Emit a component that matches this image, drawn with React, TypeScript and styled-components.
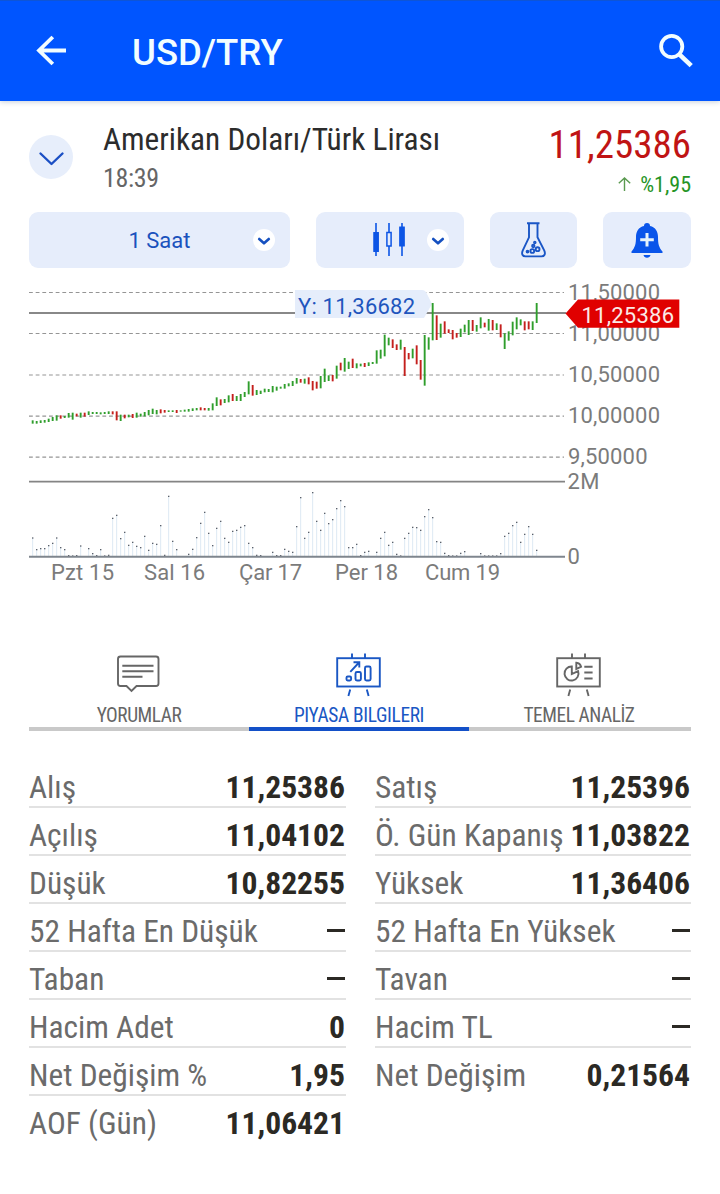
import React from "react";
import styled, { createGlobalStyle } from "styled-components";

const GlobalStyle = createGlobalStyle`
  * { box-sizing: border-box; }
  body { margin: 0; background: #fff; font-family: Roboto, "Liberation Sans", sans-serif; }
`;

const Screen = styled.main`
  width: 720px;
  height: 1194px;
  overflow: hidden;
  background: #fff;
  display: flex;
  flex-direction: column;
`;

const AppBar = styled.header`
  height: 101px;
  flex: none;
  background: #0055ff;
  border-top: 1px solid #0f55d6;
  box-shadow: 0 1px 5px rgba(0, 40, 90, 0.22);
  display: flex;
  align-items: center;
  padding: 0 25px 0 34px;
`;

const Title = styled.h1`
  flex: 1;
  margin: 4px 0 0 64px;
  color: #f2fdff;
  font-size: 36.5px;
  line-height: 44px;
  font-weight: 500;
`;

const Condensed = styled.span<{ $size: number; $weight?: number; $color: string; $line: number; $spacing?: number }>`
  font-family: "Roboto Condensed", Roboto, sans-serif;
  font-stretch: 75%;
  font-size: ${(p) => p.$size}px;
  font-weight: ${(p) => p.$weight ?? 400};
  line-height: ${(p) => p.$line}px;
  letter-spacing: ${(p) => p.$spacing ?? 0}px;
  color: ${(p) => p.$color};
  white-space: nowrap;
`;

const Summary = styled.section`
  display: flex;
  height: 111px;
  padding: 0 29px;
`;

const RoundToggle = styled.button`
  width: 44px;
  height: 44px;
  margin: 34px 30px 0 0;
  padding: 0;
  border: 0;
  border-radius: 50%;
  background: #e7eefb;
`;

const NameBlock = styled.div`
  flex: 1;
  display: flex;
  flex-direction: column;
  padding-top: 20px;
`;

const PriceBlock = styled.div`
  display: flex;
  flex-direction: column;
  align-items: flex-end;
  padding-top: 21px;
`;

const Change = styled.div`
  display: flex;
  align-items: center;
  gap: 9px;
  padding-top: 1px;
  svg { margin-top: -3px; }
`;

const Toolbar = styled.nav`
  display: flex;
  gap: 26px;
  height: 56px;
  padding: 0 29px;
`;

const ToolButton = styled.button<{ $width: number }>`
  width: ${(p) => p.$width}px;
  height: 56px;
  padding: 0;
  border: 0;
  border-radius: 9px;
  background: #e6edfb;
  color: #1a52bd;
  font: 400 22px/56px Roboto, sans-serif;
  display: flex;
  align-items: center;
  justify-content: center;
`;

const ToolContent = styled.span<{ $pad: number; $drop?: number }>`
  flex: 1;
  display: flex;
  justify-content: center;
  padding: ${(p) => p.$drop ?? 0}px 0 0 ${(p) => p.$pad}px;
`;

const Dot = styled.span<{ $right: number }>`
  width: 22px;
  height: 22px;
  margin-right: ${(p) => p.$right}px;
  border-radius: 50%;
  background: #fff;
  display: flex;
`;

const ChartArea = styled.section`
  height: 332px;
  svg { display: block; }
  text { font-family: Roboto, sans-serif; font-size: 22px; }
`;

const Tabs = styled.nav`
  display: grid;
  grid-template-columns: 220px 220px 222px;
  margin: 50px 29px 0;
`;

const Tab = styled.button<{ $active?: boolean }>`
  height: 81px;
  padding: 3px 0 0;
  border: 0;
  border-bottom: 4px solid ${(p) => (p.$active ? "#1350c8" : "#c9c9c9")};
  background: none;
  color: ${(p) => (p.$active ? "#1a57c4" : "#666")};
  display: flex;
  flex-direction: column;
  align-items: center;
  gap: 7px;
  svg { flex: none; margin-right: 1px; }
  &:last-child { padding-right: 2px; }
`;

const Columns = styled.section`
  display: grid;
  grid-template-columns: 317px 316px;
  column-gap: 29px;
  padding: 29px 29px 0;
`;

const Row = styled.div<{ $last?: boolean }>`
  height: 48px;
  border-bottom: 2px solid ${(p) => (p.$last ? "transparent" : "#e2e2e2")};
  display: flex;
  justify-content: space-between;
  align-items: center;
  padding: 9px 1px 0 0;
`;

const Dash = styled.i`
  width: 18px;
  height: 3px;
  margin-top: -2px;
  background: #2b2924;
`;

const CHART_TOP = 268;
const STEP = 4;
const FIRST_X = 32.67;

// Each entry: top, bottom (in thirds of a pixel below y = 280); r marks a falling hour.
const candles =
  "421-431 423-431 421-429 420-428 416-426 411-423 406-422 406-416r 408-414 399-413 398-419 401-409r 398-413 398-410r 394-405 396-402 396-402 397-403 396-402 394-402 394-403r 394-421r 404-423 404-415r 404-412 402-414r 398-413 401-410 396-409 390-406 386-402 390-403 388-400r 390-398r 391-396 391-396 390-399r 391-395 389-395 387-395 385-393 384-391 382-391r 384-391r 384-392 370-391 352-378 358-376r 357-369 346-367 342-363r 348-363 342-363 336-351 304-343 315-347r 330-345 332-342 326-337 327-336 318-337 320-332 320-326 312-326 310-319 303-318 294-311 297-308r 296-311 292-313r 303-331r 305-326r 288-325 266-306 286-303 285-304r 257-296 248-271r 234-275 245-267 236-264r 250-265 251-259 249-261r 247-258 246-252 211-251 209-236 164-229 173-196 178-204r 193-210r 179-209 201-288r 219-238r 206-235 196-253r 240-299r 165-317 172-209 69-181 106-180r 131-173 124-161r 148-159r 150-178r 159-173r 146-171 134-157 120-165 120-153r 135-155 112-145 128-142r 117-152 120-151r 130-150 133-172r 160-207 154-182 125-166 112-148 118-136 124-151r 124-148r 124-150 69-129"
    .split(" ")
    .map((entry) => {
      const [top, bottom] = entry.replace("r", "").split("-").map(Number);
      return { top: 280 + top / 3, bottom: 280 + bottom / 3, down: entry.endsWith("r") };
    });

// Top of each hour's volume bar, in thirds of a pixel below y = 470.
const volumes = [
  204, 239, 236, 236, 227, 220, 204, 233, 239, 257, 258, 257, 228, 260, 236, 251, 257, 239, 258, 256, 145, 136, 206, 187,
  226, 217, 229, 233, 199, 241, 220, 223, 167, 256, 79, 214, 239, 260, 260, 253, 238, 203, 160, 127, 190, 227, 175, 154,
  205, 217, 184, 181, 172, 167, 220, 233, 256, 257, 260, 260, 247, 257, 257, 238, 244, 247, 170, 83, 205, 187, 68, 154,
  181, 130, 161, 149, 116, 92, 110, 233, 233, 223, 257, 247, 244, 260, 247, 205, 187, 226, 217, 253, 258, 205, 190, 172,
  173, 181, 140, 119, 143, 215, 217, 250, 257, 258, 258, 250, 245, 260, 260, 260, 251, 258, 258, 258, 258, 251, 199, 190,
  167, 157, 217, 193, 170, 193, 241,
].map((v) => 470 + v / 3);

const gridLines = [
  { y: 292.5, label: "11,50000", width: 92 },
  { y: 333.5, label: "11,00000", width: 92 },
  { y: 375, label: "10,50000", width: 92 },
  { y: 416.2, label: "10,00000", width: 92 },
  { y: 457.2, label: "9,50000", width: 79.5 },
];

const days = [
  { x: 51, label: "Pzt 15", width: 63 },
  { x: 144, label: "Sal 16", width: 61 },
  { x: 239, label: "Çar 17", width: 63 },
  { x: 335, label: "Per 18", width: 63 },
  { x: 425, label: "Cum 19", width: 75 },
];

const Chart = () => (
  <ChartArea>
    <svg width="720" height="332" viewBox={`0 ${CHART_TOP} 720 332`}>
      {gridLines.map((g) => (
        <g key={g.label}>
          <line x1="29" x2="564" y1={g.y} y2={g.y} stroke="#959595" strokeWidth="1.2" strokeDasharray="3.8 2.87" />
          <text x="568" y={g.y + 7} fill="#7b7b7b" textLength={g.width}>{g.label}</text>
        </g>
      ))}
      <line x1="29" x2="566" y1="313" y2="313" stroke="#888" strokeWidth="2" />
      <line x1="29" x2="565" y1="481.6" y2="481.6" stroke="#848484" strokeWidth="1.7" />
      {volumes.map((top, i) => {
        const x = FIRST_X + i * STEP;
        return top > 556 ? null : (
          <g key={i}>
            <line x1={x} x2={x} y1={top} y2="556" stroke="#dde9f3" strokeWidth="1" />
            <rect x={x - 0.6} y={top - 0.6} width="1.3" height="1.2" fill="#444a55" />
          </g>
        );
      })}
      <line x1="29" x2="565" y1="556.8" y2="556.8" stroke="#7f868e" strokeWidth="2" />
      <path d="M295 290h127q3 0 4.5 3L432 304l-8 14H295z" fill="#e5edfb" />
      {candles.map((c, i) => {
        const x = FIRST_X + i * STEP;
        return <line key={i} x1={x} x2={x} y1={c.top} y2={c.bottom} stroke={c.down ? "#c4201d" : "#2f9e2c"} strokeWidth="1.9" />;
      })}
      <text x="298" y="313.5" fill="#1f55bd" textLength="117">Y: 11,36682</text>
      <path d="M565.5 313.5 578 299.5h101.3v28.3H578z" fill="#e00000" />
      <text x="581.5" y="322.7" fill="#fbe9e6" textLength="92.5">11,25386</text>
      <text x="567.5" y="488.5" fill="#7b7b7b" textLength="32">2M</text>
      <text x="567.5" y="564" fill="#7b7b7b">0</text>
      {days.map((d) => (
        <text key={d.label} x={d.x} y="580.4" fill="#7b7b7b" textLength={d.width}>{d.label}</text>
      ))}
    </svg>
  </ChartArea>
);

const ChevronDot = ({ right }: { right: number }) => (
  <Dot $right={right}>
    <svg width="22" height="22" viewBox="0 0 22 22" fill="none" stroke="#1550c0" strokeWidth="2.6" strokeLinecap="round" strokeLinejoin="round">
      <path d="m6.2 10 4.8 4.3 4.8-4.3" />
    </svg>
  </Dot>
);

const BoardFrame = () => (
  <>
    <rect x="1.2" y="5.2" width="42.6" height="28.3" />
    <path d="M16 .5v4.7M29 .5v4.7M14.2 36.5 12.4 43M30.8 36.5l1.8 6.5" />
  </>
);

const boardProps = { width: 45, height: 44, viewBox: "0 0 45 44", fill: "none", stroke: "currentColor", strokeWidth: 1.9 };

const left: [string, string][] = [
  ["Alış", "11,25386"],
  ["Açılış", "11,04102"],
  ["Düşük", "10,82255"],
  ["52 Hafta En Düşük", ""],
  ["Taban", ""],
  ["Hacim Adet", "0"],
  ["Net Değişim %", "1,95"],
  ["AOF (Gün)", "11,06421"],
];

const right: [string, string][] = [
  ["Satış", "11,25396"],
  ["Ö. Gün Kapanış", "11,03822"],
  ["Yüksek", "11,36406"],
  ["52 Hafta En Yüksek", ""],
  ["Tavan", ""],
  ["Hacim TL", ""],
  ["Net Değişim", "0,21564"],
];

const Stats = ({ rows }: { rows: [string, string][] }) => (
  <div>
    {rows.map(([label, value], i) => (
      <Row key={label} $last={i === rows.length - 1}>
        <Condensed $size={31.4} $line={36} $color="#6b6b6b">{label}</Condensed>
        {value ? <Condensed $size={31.6} $line={36} $weight={700} $color="#2b2924">{value}</Condensed> : <Dash />}
      </Row>
    ))}
  </div>
);

export default function App() {
  return (
    <Screen>
      <GlobalStyle />
      <AppBar>
        <svg width="34" height="34" viewBox="0 0 34 34" fill="none" stroke="#f2fdff" strokeWidth="3.8">
          <path d="M32 16.5H5M18.8 3 5 16.5 18.8 30" />
        </svg>
        <Title>USD/TRY</Title>
        <svg width="36" height="36" viewBox="0 0 36 36" fill="none" stroke="#f2fdff">
          <circle cx="12.7" cy="13.5" r="10.6" strokeWidth="3.8" />
          <path d="m20.6 21.6 11.6 11" strokeWidth="4.6" />
        </svg>
      </AppBar>
      <Summary>
        <RoundToggle aria-label="Detay">
          <svg width="44" height="44" viewBox="0 0 44 44" fill="none" stroke="#1b4fc4" strokeWidth="2.4" strokeLinecap="round" strokeLinejoin="round">
            <path d="m11.5 18.5 11 10.5 11-10.5" />
          </svg>
        </RoundToggle>
        <NameBlock>
          <Condensed $size={31.3} $line={37} $color="#2c2c2c">Amerikan Doları/Türk Lirası</Condensed>
          <Condensed $size={26} $line={40} $spacing={-0.3} $color="#666">18:39</Condensed>
        </NameBlock>
        <PriceBlock>
          <Condensed $size={39} $line={46} $color="#c01414">11,25386</Condensed>
          <Change>
            <svg width="13" height="14" viewBox="0 0 13 14" fill="none" stroke="#5a9a50" strokeWidth="1.4">
              <path d="M6.5 14V1M.8 6.2 6.5 1l5.7 5.2" />
            </svg>
            <Condensed $size={22} $line={32} $color="#259425">%1,95</Condensed>
          </Change>
        </PriceBlock>
      </Summary>
      <Toolbar>
        <ToolButton $width={261}>
          <ToolContent $pad={37} $drop={2}>1 Saat</ToolContent>
          <ChevronDot right={15} />
        </ToolButton>
        <ToolButton $width={148}>
          <ToolContent $pad={34}>
            <svg width="34" height="34" viewBox="0 0 34 34" stroke="#0d55e5" fill="#0d55e5">
              <path d="M4 0v33M17 0v33M30 0v33" strokeWidth="1.6" />
              <rect x="1.8" y="9.5" width="4.6" height="19" />
              <rect x="14.9" y="9.5" width="4.2" height="13.5" fill="#e6edfb" strokeWidth="1.5" />
              <rect x="27.7" y="4" width="4.6" height="19" />
            </svg>
          </ToolContent>
          <ChevronDot right={15} />
        </ToolButton>
        <ToolButton $width={87}>
          <svg width="26" height="38" viewBox="0 0 26 38" fill="none" stroke="#1a56c6" strokeWidth="1.9">
            <path d="M6 2.3h12.5M8 2.5v13.8L1.7 29.6c-1.4 3.3-.2 5.8 2.8 5.8h16c3 0 4.2-2.5 2.8-5.8L16.5 16.3V2.5" />
            <circle cx="6.5" cy="30.6" r=".9" />
            <circle cx="11.3" cy="30" r="1.9" />
            <circle cx="16.6" cy="28.2" r="1.9" />
            <circle cx="12.3" cy="25" r="1.2" />
            <circle cx="13.8" cy="21.5" r=".8" />
          </svg>
        </ToolButton>
        <ToolButton $width={88}>
          <svg width="32" height="36" viewBox="0 0 32 36">
            <path d="M16 1a3 3 0 0 0-3 3C7.5 5.300 5 9.500 5 15c0 6.500-.8 10.500-4.500 14.500v1.500h31v-1.500c-3.700-4-4.500-8-4.500-14.500C27 9.500 24.500 5.300 19 4a3 3 0 0 0-3-3ZM12.500 33a3.600 3.600 0 0 0 7 0Z" fill="#0a55ea" />
            <path d="M16 11v13.500M9.200 17.800h13.600" stroke="#e6f3fb" strokeWidth="3" />
          </svg>
        </ToolButton>
      </Toolbar>
      <Chart />
      <Tabs>
        <Tab>
          <svg width="45" height="44" viewBox="0 0 45 44" fill="none" stroke="currentColor" strokeWidth="1.9">
            <path d="M4.5 3.5H40A2.5 2.5 0 0 1 42.500 6v24.500A2.500 2.500 0 0 1 40 33H20.500l-5 5-5-5h-6A2.500 2.500 0 0 1 2 30.500V6a2.500 2.500 0 0 1 2.500-2.500ZM6.300 12.800H37.500M6.300 18.200H37.500M6.300 23.700H26.500" />
          </svg>
          <Condensed $size={19.4} $line={24} $spacing={-0.45} $color="#666">YORUMLAR</Condensed>
        </Tab>
        <Tab $active>
          <svg {...boardProps}>
            <BoardFrame />
            <rect x="10.5" y="23.5" width="4.6" height="4" rx="1.2" />
            <rect x="19.5" y="19" width="5.4" height="8.5" rx="1.5" />
            <rect x="29" y="13.5" width="5.6" height="14" rx="1.5" />
            <path d="M14.3 18.8 23 9.5M17.5 9.3H23.3V14.5" />
          </svg>
          <Condensed $size={19.4} $line={24} $spacing={-0.35} $color="#1a57c4">PIYASA BILGILERI</Condensed>
        </Tab>
        <Tab>
          <svg {...boardProps}>
            <BoardFrame />
            <path d="M15.8 13.5a7 7 0 1 0 6.3 4.6L15.8 21ZM20.3 9.8v6.2l4.8-2.3a5.5 5.5 0 0 0-4.8-3.9ZM28.3 13.8h8.3M28.3 19.5h8.3M28.3 25.5h8.3" />
          </svg>
          <Condensed $size={19.4} $line={24} $spacing={-0.45} $color="#666">TEMEL ANALİZ</Condensed>
        </Tab>
      </Tabs>
      <Columns>
        <Stats rows={left} />
        <Stats rows={right} />
      </Columns>
    </Screen>
  );
}
